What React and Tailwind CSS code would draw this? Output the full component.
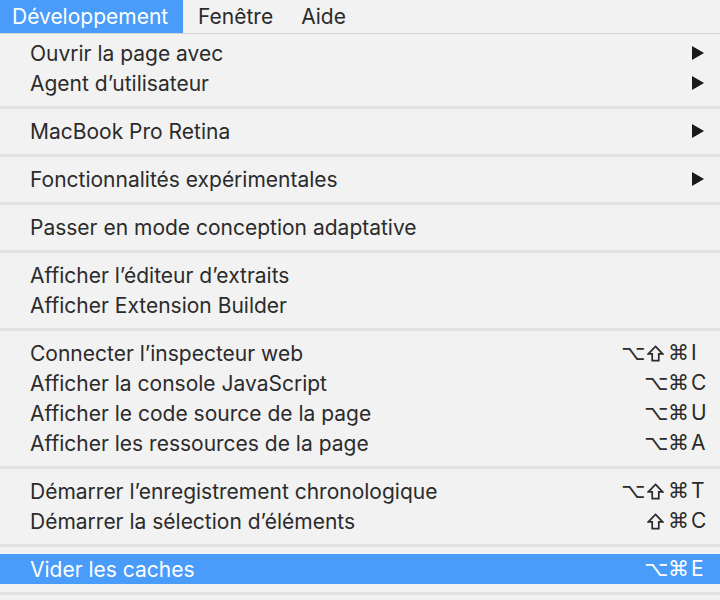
import React from "react";

const groups = [
  [
    { label: "Ouvrir la page avec", sub: true },
    { label: "Agent d’utilisateur", sub: true },
  ],
  [{ label: "MacBook Pro Retina", sub: true }],
  [{ label: "Fonctionnalités expérimentales", sub: true }],
  [{ label: "Passer en mode conception adaptative" }],
  [
    { label: "Afficher l’éditeur d’extraits" },
    { label: "Afficher Extension Builder" },
  ],
  [
    { label: "Connecter l’inspecteur web", keys: ["⌥", "⇧", "⌘", "I"] },
    { label: "Afficher la console JavaScript", keys: ["⌥", "⌘", "C"] },
    { label: "Afficher le code source de la page", keys: ["⌥", "⌘", "U"] },
    { label: "Afficher les ressources de la page", keys: ["⌥", "⌘", "A"] },
  ],
  [
    { label: "Démarrer l’enregistrement chronologique", keys: ["⌥", "⇧", "⌘", "T"] },
    { label: "Démarrer la sélection d’éléments", keys: ["⇧", "⌘", "C"] },
  ],
  [{ label: "Vider les caches", keys: ["⌥", "⌘", "E"], active: true }],
];

const Arrow = () => (
  <svg width="14" height="16" viewBox="0 0 14 16" className="mr-[2px] shrink-0">
    <polygon points="1,1 13,8 1,15" fill="#1a1a1a" />
  </svg>
);

// shift key glyph, outlined arrow
const Shift = () => (
  <span className="flex w-[23px] justify-center">
    <svg width="17" height="17" viewBox="0 0 17 17">
      <path
        d="M8.5 1.4 L15.6 8.8 L11.8 8.8 L11.8 15.7 L5.2 15.7 L5.2 8.8 L1.4 8.8 Z"
        fill="none"
        stroke="currentColor"
        strokeWidth="1.7"
      />
    </svg>
  </span>
);

const Keys = ({ keys }) => (
  <div className="flex items-center">
    {keys.map((k, i) => {
      if (k === "⇧") return <Shift key={i} />;
      if (/[A-Z]/.test(k))
        return (
          <span key={i} className="w-[17px] pl-[1px] text-left">
            {k}
          </span>
        );
      return (
        <span
          key={i}
          className="w-[23px] text-center font-['DejaVu_Sans',sans-serif] text-[21px] leading-none"
        >
          {k}
        </span>
      );
    })}
  </div>
);

const Item = ({ item }) => (
  <div
    className={
      "flex h-[30px] items-center justify-between pl-[30px] pr-[13px] " +
      (item.active ? "bg-[#4a9cfa] text-white" : "text-[#2b2b2b]")
    }
  >
    <span className="pt-[1px]">{item.label}</span>
    {item.sub && <Arrow />}
    {item.keys && <Keys keys={item.keys} />}
  </div>
);

export default function App() {
  return (
    <div className="h-[600px] w-[720px] overflow-hidden bg-[#f2f2f2] font-['Inter',sans-serif] text-[21px]">
      <div className="flex h-[34px] items-center border-b border-[#d4d4d4] text-[#2b2b2b]">
        <div className="flex h-full w-[183px] items-center bg-[#4a9cfa] pl-[12px] text-white">
          Développement
        </div>
        <div className="pl-[15px]">Fenêtre</div>
        <div className="pl-[28px]">Aide</div>
      </div>
      <div className="pt-[4px]">
        {groups.map((g, gi) => (
          <div key={gi}>
            {gi > 0 && (
              <div className="flex h-[18px] items-center">
                <div className="h-[3px] w-full bg-[#e2e2e2]" />
              </div>
            )}
            {g.map((item, ii) => (
              <Item key={ii} item={item} />
            ))}
          </div>
        ))}
        <div className="flex h-[18px] items-center">
          <div className="h-[3px] w-full bg-[#e2e2e2]" />
        </div>
      </div>
    </div>
  );
}
